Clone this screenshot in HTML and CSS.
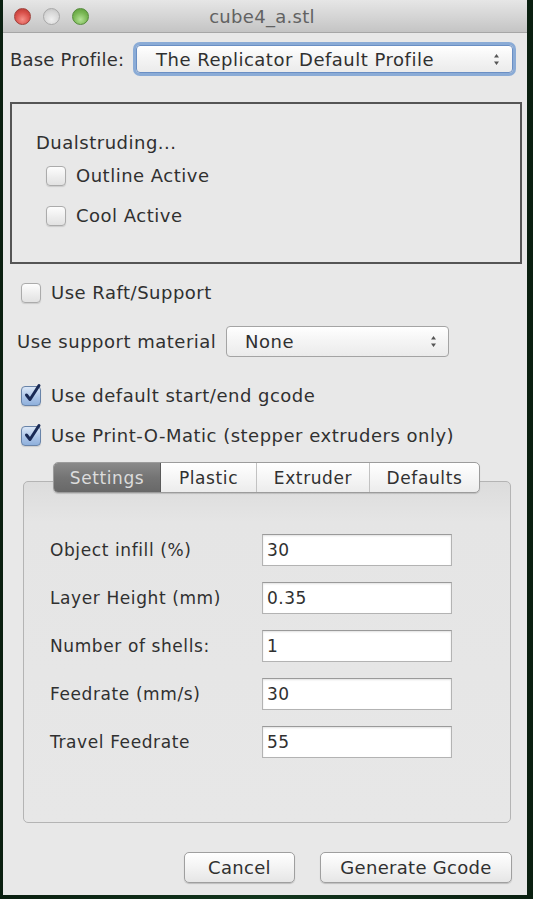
FILE: index.html
```html
<!DOCTYPE html>
<html>
<head>
<meta charset="utf-8">
<title>cube4_a.stl</title>
<link rel="stylesheet" href="styles.css">
</head>
<body>
<div class="window">
  <div class="titlebar">
    <div class="lights">
      <span class="light red"></span>
      <span class="light grey"></span>
      <span class="light green"></span>
    </div>
    <div class="title">cube4_a.stl</div>
    <div></div>
  </div>

  <div class="content">
    <div class="base-row">
      <span class="label base-label">Base Profile:</span>
      <div class="select focus">
        <span class="select-text">The Replicator Default Profile</span>
        <svg class="arrows" width="7" height="13" viewBox="0 0 7 13"><path d="M3.5 1 L6 4.5 L1 4.5 Z M3.5 12 L6 8.5 L1 8.5 Z" fill="#555"/></svg>
      </div>
    </div>

    <div class="dual-box">
      <div class="dual-title">Dualstruding...</div>
      <label class="check-row indent">
        <span class="cb"></span><span>Outline Active</span>
      </label>
      <label class="check-row indent second">
        <span class="cb"></span><span>Cool Active</span>
      </label>
    </div>

    <label class="check-row raft">
      <span class="cb"></span><span>Use Raft/Support</span>
    </label>

    <div class="support-row">
      <span class="label">Use support material</span>
      <div class="select small">
        <span class="select-text">None</span>
        <svg class="arrows" width="7" height="13" viewBox="0 0 7 13"><path d="M3.5 1 L6 4.5 L1 4.5 Z M3.5 12 L6 8.5 L1 8.5 Z" fill="#555"/></svg>
      </div>
    </div>

    <label class="check-row gcode">
      <span class="cb checked"><svg width="24" height="24" viewBox="0 0 24 24"><path d="M6.5 12 L10 16.5 L19 2.5" fill="none" stroke="#1a2a55" stroke-width="3" stroke-linecap="round" stroke-linejoin="round"/></svg></span><span>Use default start/end gcode</span>
    </label>
    <label class="check-row pom">
      <span class="cb checked"><svg width="24" height="24" viewBox="0 0 24 24"><path d="M6.5 12 L10 16.5 L19 2.5" fill="none" stroke="#1a2a55" stroke-width="3" stroke-linecap="round" stroke-linejoin="round"/></svg></span><span>Use Print-O-Matic (stepper extruders only)</span>
    </label>

    <div class="tabpanel">
      <div class="tabs">
        <span class="tab active t1">Settings</span>
        <span class="tab t2">Plastic</span>
        <span class="tab t3">Extruder</span>
        <span class="tab t4">Defaults</span>
      </div>
      <div class="fields">
        <div class="field"><span class="flabel">Object infill (%)</span><span class="input">30</span></div>
        <div class="field"><span class="flabel">Layer Height (mm)</span><span class="input">0.35</span></div>
        <div class="field"><span class="flabel">Number of shells:</span><span class="input">1</span></div>
        <div class="field"><span class="flabel">Feedrate (mm/s)</span><span class="input">30</span></div>
        <div class="field"><span class="flabel">Travel Feedrate</span><span class="input">55</span></div>
      </div>
    </div>

    <div class="buttons">
      <span class="btn cancel">Cancel</span>
      <span class="btn generate">Generate Gcode</span>
    </div>
  </div>
</div>
</body>
</html>
```

FILE: styles.css
```css
html, body {
  margin: 0;
  padding: 0;
}
body {
  background: linear-gradient(90deg, #0a1f10 0%, #12361d 50%, #0a1f10 100%);
  width: 533px;
  height: 899px;
  overflow: hidden;
  font-family: "DejaVu Sans", "Liberation Sans", sans-serif;
  color: #303030;
}
.window {
  margin-left: 3px;
  width: 524px;
  height: 895px;
  background: #e8e8e8;
  display: flex;
  flex-direction: column;
}
.titlebar {
  height: 33px;
  flex: 0 0 33px;
  box-sizing: border-box;
  display: grid;
  grid-template-columns: 1fr auto 1fr;
  align-items: center;
  background: linear-gradient(#e6e6e6, #d2d2d2 60%, #c4c4c4);
  border-bottom: 1px solid #a6a6a6;
}
.lights {
  display: flex;
  gap: 12px;
  padding-left: 11px;
  padding-top: 1px;
}
.light {
  width: 17px;
  height: 17px;
  border-radius: 50%;
  box-sizing: border-box;
}
.red {
  background: radial-gradient(circle at 50% 70%, #f59088, #d9504a 55%, #b2342d);
  border: 1px solid #a0413b;
}
.grey {
  background: radial-gradient(circle at 50% 70%, #efefef, #d6d6d6 60%, #bdbdbd);
  border: 1px solid #a8a8a8;
}
.green {
  background: radial-gradient(circle at 50% 70%, #b4e296, #78b652 55%, #589a36);
  border: 1px solid #558a3c;
}
.title {
  font-size: 18px;
  color: #626262;
  letter-spacing: 0.3px;
  padding-right: 6px;
}

.content {
  display: flex;
  flex-direction: column;
  font-size: 18px;
  letter-spacing: 0.5px;
}

/* base profile */
.base-row {
  margin-top: 12px;
  height: 28px;
  display: flex;
  align-items: center;
  padding-left: 7px;
}
.base-label {
  letter-spacing: 0.2px;
}
.select {
  box-sizing: border-box;
  display: flex;
  align-items: center;
  justify-content: space-between;
  background: linear-gradient(#ffffff, #f4f4f4 50%, #ebebeb);
  border: 1px solid #a4a4a4;
  border-radius: 4px;
}
.select.focus {
  margin-left: auto;
  margin-right: 14px;
  width: 377px;
  height: 28px;
  padding: 0 12px 0 19px;
  box-shadow: 0 0 0 3px #8aabd6;
  border-color: #6a8fc4;
}
.select.small {
  width: 223px;
  height: 31px;
  padding: 0 11px 0 18px;
  margin-left: auto;
  margin-right: 78px;
}
.arrows {
  display: block;
}

/* dual box */
.dual-box {
  margin: 29px 0 0 7px;
  width: 512px;
  height: 162px;
  box-sizing: border-box;
  border: 2px solid #555555;
  padding: 27px 0 0 24px;
  display: flex;
  flex-direction: column;
}
.dual-title {
  height: 24px;
  line-height: 24px;
}
.check-row {
  display: flex;
  align-items: center;
  gap: 10px;
  height: 22px;
  line-height: 22px;
}
.check-row.indent {
  margin-left: 10px;
  margin-top: 10px;
}
.check-row.indent.second {
  margin-top: 18px;
}
.cb {
  position: relative;
  flex: 0 0 20px;
  width: 20px;
  height: 20px;
  box-sizing: border-box;
  border: 1px solid #ababab;
  border-radius: 4px;
  background: linear-gradient(#fdfdfd, #ececec 60%, #e2e2e2);
  box-shadow: 0 1px 1px rgba(0,0,0,0.12);
}
.cb.checked {
  background: linear-gradient(#dbe7f7, #a9c3e6 60%, #8fb0dc);
  border-color: #6883a8;
}
.cb.checked svg {
  position: absolute;
  left: -2px;
  top: -4px;
}
.check-row.raft {
  margin: 18px 0 0 18px;
}
.support-row {
  margin-top: 22px;
  height: 31px;
  display: flex;
  align-items: center;
  padding-left: 14px;
}
.check-row.gcode {
  margin: 28px 0 0 18px;
}
.check-row.pom {
  margin: 18px 0 0 18px;
}

/* tab panel */
.tabpanel {
  margin: 34px 0 0 20px;
  width: 488px;
  height: 342px;
  box-sizing: border-box;
  border: 1px solid #b4b4b4;
  border-radius: 5px;
  background: linear-gradient(#dcdcdc, #e5e5e5 40px, #e7e7e7);
  display: flex;
  flex-direction: column;
}
.tabs {
  margin: -20px 0 0 29px;
  display: flex;
  height: 31px;
  width: 427px;
  box-sizing: border-box;
  border: 1px solid #9c9c9c;
  border-radius: 5px;
  overflow: hidden;
  background: linear-gradient(#ffffff, #f6f6f6 50%, #ececec);
  box-shadow: 0 1px 1px rgba(0,0,0,0.15);
}
.tab {
  display: flex;
  align-items: center;
  justify-content: center;
  box-sizing: border-box;
  font-size: 17px;
  letter-spacing: 0.6px;
  color: #303030;
  border-right: 1px solid #c2c2c2;
}
.tab.t1 { width: 107px; }
.tab.t2 { width: 96px; }
.tab.t3 { width: 113px; }
.tab.t4 { flex: 1; border-right: none; }
.tab.active {
  background: linear-gradient(#8a8a8a, #747474 50%, #686868);
  color: #dcdcdc;
  border-right-color: #5a5a5a;
}
.fields {
  margin-top: 41px;
  display: flex;
  flex-direction: column;
  gap: 16px;
  padding-left: 26px;
}
.field {
  display: flex;
  align-items: center;
  height: 32px;
}
.flabel {
  width: 212px;
  font-size: 17px;
  letter-spacing: 0.6px;
}
.input {
  box-sizing: border-box;
  width: 190px;
  height: 32px;
  background: #ffffff;
  border: 1px solid #b3b3b3;
  border-top-color: #9a9a9a;
  box-shadow: inset 0 1px 2px rgba(0,0,0,0.12);
  padding-left: 4px;
  line-height: 30px;
  font-size: 17px;
}

/* buttons */
.buttons {
  margin-top: 29px;
  display: flex;
  justify-content: flex-end;
  gap: 25px;
  padding-right: 15px;
}
.btn {
  box-sizing: border-box;
  height: 31px;
  display: flex;
  align-items: center;
  justify-content: center;
  border: 1px solid #9f9f9f;
  border-radius: 5px;
  background: linear-gradient(#ffffff, #f3f3f3 50%, #e6e6e6);
  box-shadow: 0 1px 1px rgba(0,0,0,0.18);
  font-size: 18px;
  letter-spacing: 0.3px;
}
.btn.cancel { width: 111px; }
.btn.generate { width: 192px; }
```
